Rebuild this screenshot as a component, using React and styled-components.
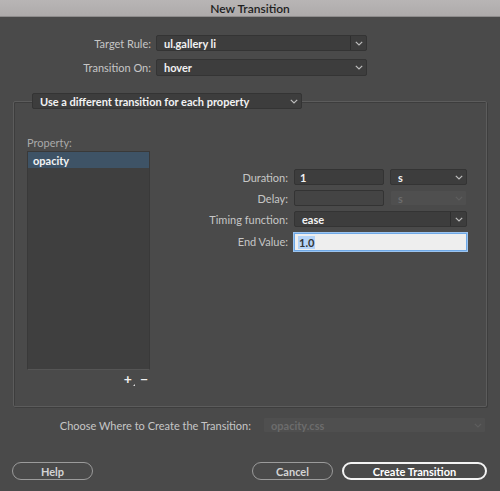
import React from 'react';
import styled, { createGlobalStyle } from 'styled-components';

const GlobalStyle = createGlobalStyle`
  html, body {
    margin: 0;
    padding: 0;
    background: #4a4a4a;
  }
  * {
    box-sizing: border-box;
  }
`;

const Window = styled.div`
  width: 500px;
  height: 491px;
  background: #4a4a4a;
  font-family: Lato, 'Liberation Sans', sans-serif;
  font-size: 11px;
  color: #cfcfcf;
  overflow: hidden;
  display: flex;
  flex-direction: column;
`;

const TitleBar = styled.div`
  height: 17px;
  background: linear-gradient(#b8b5b5, #aeabab);
  border-bottom: 1px solid #8e8c8c;
  color: #1e1e1e;
  font-size: 12px;
  font-weight: 600;
  display: flex;
  align-items: center;
  justify-content: center;
`;

const TopForm = styled.div`
  display: grid;
  grid-template-columns: 151px 211px;
  column-gap: 5px;
  row-gap: 8px;
  padding-top: 18px;
  align-items: center;
`;

const Label = styled.label`
  text-align: right;
  color: #c6c6c6;
  white-space: nowrap;
`;

const SelectBox = styled.div`
  height: ${p => p.h || 16}px;
  display: flex;
  align-items: stretch;
  background: ${p => (p.disabled ? '#4f4f4f' : '#3d3d3d')};
  border: 1px solid ${p => (p.disabled ? '#4a4a4a' : '#343434')};
  border-radius: 2px;
  grid-column: ${p => p.span || 'auto'};
  color: ${p => (p.disabled ? '#6c6c6c' : '#f2f2f2')};
  font-weight: 700;
`;

const SelectValue = styled.div`
  flex: 1;
  display: flex;
  align-items: center;
  padding-left: ${p => p.pad || 7}px;
  white-space: nowrap;
  overflow: hidden;
`;

const Arrow = styled.div`
  width: 16px;
  display: flex;
  align-items: center;
  justify-content: center;
  border-left: 1px solid ${p => (p.split ? '#2e2e2e' : 'transparent')};
`;

const Chevron = ({ color = '#bdbdbd' }) => (
  <svg width="8" height="5" viewBox="0 0 8 5">
    <polyline points="0.8,0.8 4,4 7.2,0.8" fill="none" stroke={color} strokeWidth="1.2" />
  </svg>
);

const Select = ({ value, split, disabled, span, pad, h }) => (
  <SelectBox disabled={disabled} span={span} h={h}>
    <SelectValue pad={pad}>{value}</SelectValue>
    <Arrow split={split}>
      <Chevron color={disabled ? '#5e5e5e' : '#bdbdbd'} />
    </Arrow>
  </SelectBox>
);

const Group = styled.fieldset`
  margin: 17px 13px 0 13px;
  padding: 0 0 0 13px;
  height: 314px;
  border: 1px solid #5c5c5c;
  border-radius: 2px;
  box-shadow: inset 1px 1px 0 #3d3d3d, 1px 1px 0 #3e3e3e;
  min-inline-size: 0;
  display: flex;
`;

const Legend = styled.legend`
  padding: 0;
  margin-left: 5px;
  width: 270px;
`;

const LeftCol = styled.div`
  width: 123px;
  padding-top: 27px;
  display: flex;
  flex-direction: column;
`;

const PropLabel = styled.div`
  color: #a9a9a9;
  height: 15px;
  line-height: 14px;
`;

const List = styled.div`
  height: 219px;
  background: #3f3f3f;
  border: 1px solid #393939;
  border-bottom-color: #555;
`;

const ListItem = styled.div`
  height: 16px;
  padding-left: 5px;
  display: flex;
  align-items: center;
  font-weight: 700;
  color: #f4f4f4;
  background: ${p => (p.selected ? '#3e5366' : 'transparent')};
`;

const ListTools = styled.div`
  display: flex;
  justify-content: flex-end;
  gap: 8px;
  padding: 3px 2px 0 0;
  color: #f0f0f0;
  font-weight: 700;
  font-size: 14px;
  line-height: 12px;
`;

const Plus = styled.span`
  position: relative;
  &::after {
    content: '';
    position: absolute;
    right: -3px;
    bottom: -1px;
    border-left: 2px solid transparent;
    border-bottom: 2px solid #ddd;
  }
`;

const RightCol = styled.div`
  margin-left: 8px;
  padding-top: 60px;
  display: grid;
  grid-template-columns: 130px 90px 77px;
  grid-auto-rows: min-content;
  column-gap: 6px;
  row-gap: 5px;
  align-items: center;
`;

const Input = styled.div`
  height: ${p => p.h || 16}px;
  display: flex;
  align-items: center;
  padding-left: 5px;
  grid-column: ${p => p.span || 'auto'};
  background: ${p => (p.disabled ? '#444' : '#3d3d3d')};
  border: 1px solid #333;
  border-radius: 2px;
  color: #f2f2f2;
  font-weight: 700;
`;

const FocusInput = styled.div`
  height: 18px;
  margin-top: 1px;
  grid-column: 2 / 4;
  display: flex;
  align-items: center;
  padding-left: 3px;
  background: #eeeeee;
  border: 1px solid #6ea8e6;
  box-shadow: 0 0 0 1px #9cc4ef;
  color: #333;
  font-weight: 700;
`;

const Highlight = styled.span`
  background: #b5d4f8;
  padding: 0 1px;
`;

const ChooseRow = styled.div`
  display: grid;
  grid-template-columns: 251px 223px;
  column-gap: 12px;
  align-items: center;
  margin-top: 10px;
`;

const ChooseLabel = styled.div`
  text-align: right;
  color: #c6c6c6;
`;

const Buttons = styled.div`
  display: flex;
  align-items: center;
  margin: 29px 13px 0 12px;
`;

const Button = styled.button`
  font-family: inherit;
  font-size: 11px;
  font-weight: 700;
  height: 18px;
  width: ${p => p.w}px;
  margin-left: ${p => p.ml || 0}px;
  border-radius: 9px;
  background: #4a4a4a;
  color: ${p => (p.primary ? '#fff' : '#d4d4d4')};
  border: ${p => (p.primary ? '2px solid #f4f4f4' : '1px solid #9b9b9b')};
  padding: 0;
  display: flex;
  align-items: center;
  justify-content: center;
`;

export default function App() {
  return (
    <Window>
      <GlobalStyle />
      <TitleBar>New Transition</TitleBar>

      <TopForm>
        <Label>Target Rule:</Label>
        <Select value="ul.gallery li" split />
        <Label>Transition On:</Label>
        <Select value="hover" h={17} />
      </TopForm>

      <Group>
        <Legend>
          <Select value="Use a different transition for each property" />
        </Legend>
        <LeftCol>
          <PropLabel>Property:</PropLabel>
          <List>
            <ListItem selected>opacity</ListItem>
          </List>
          <ListTools>
            <Plus>+</Plus>
            <span>−</span>
          </ListTools>
        </LeftCol>
        <RightCol>
          <Label>Duration:</Label>
          <Input>1</Input>
          <Select value="s" />
          <Label>Delay:</Label>
          <Input disabled />
          <Select value="s" disabled />
          <Label>Timing function:</Label>
          <Select value="ease" split span="2 / 4" />
          <Label>End Value:</Label>
          <FocusInput>
            <Highlight>1.0</Highlight>
          </FocusInput>
        </RightCol>
      </Group>

      <ChooseRow>
        <ChooseLabel>Choose Where to Create the Transition:</ChooseLabel>
        <Select value="opacity.css" disabled />
      </ChooseRow>

      <Buttons>
        <Button w={81}>Help</Button>
        <Button w={81} ml={159}>Cancel</Button>
        <Button w={145} ml={9} primary>Create Transition</Button>
      </Buttons>
    </Window>
  );
}
